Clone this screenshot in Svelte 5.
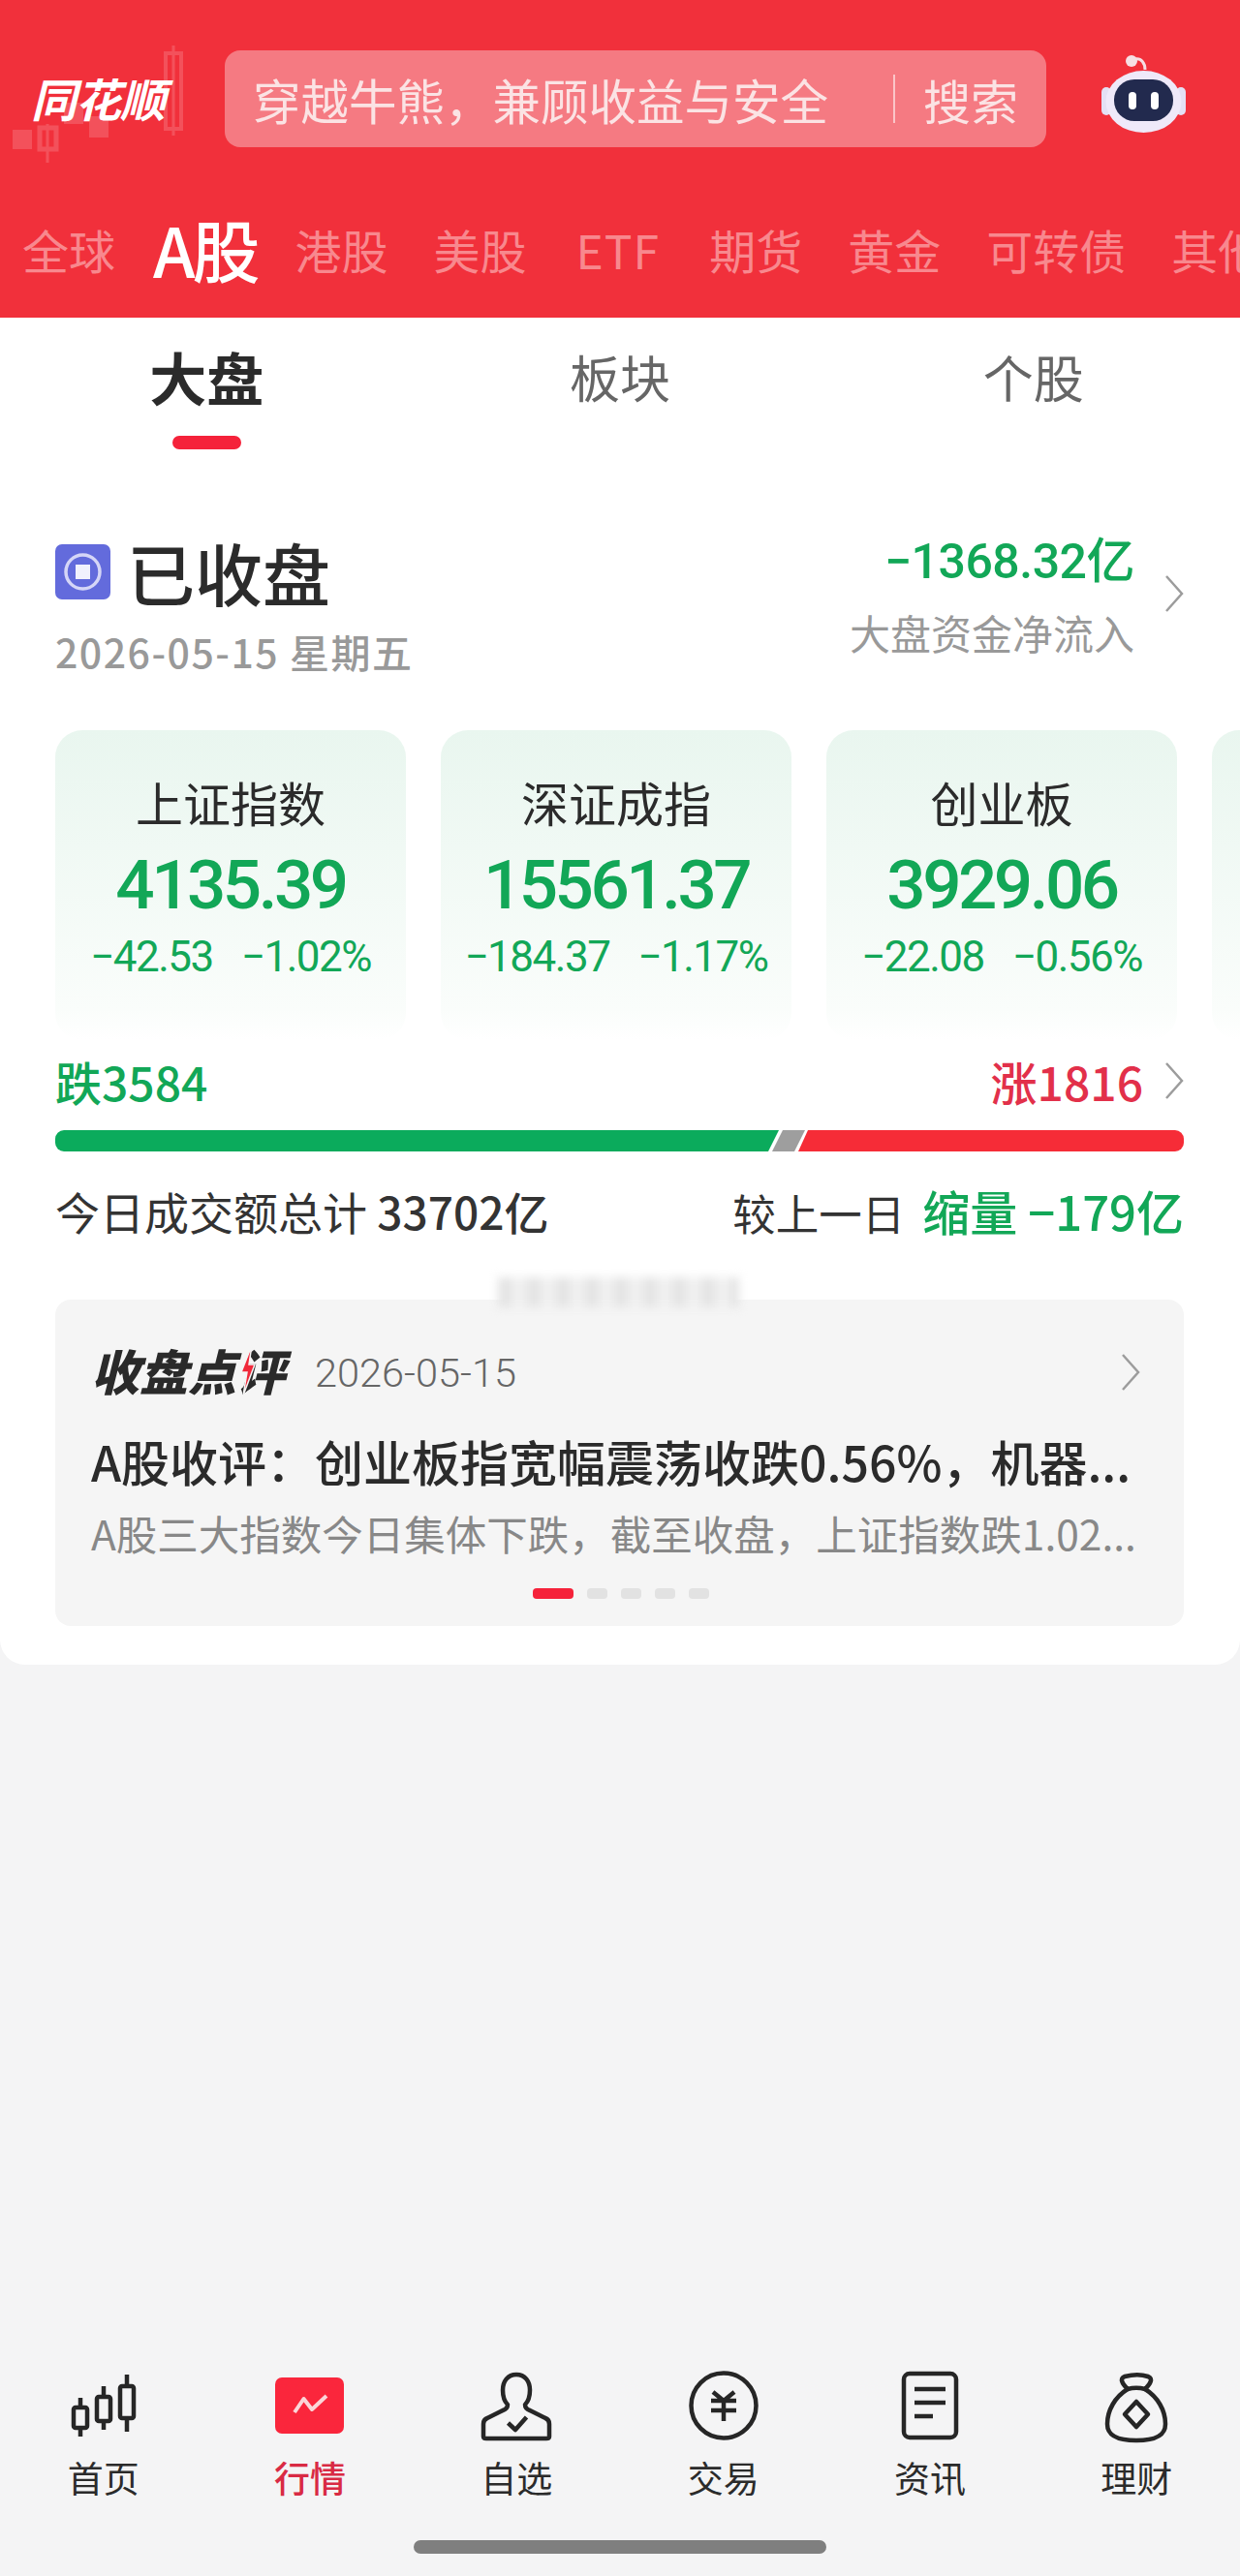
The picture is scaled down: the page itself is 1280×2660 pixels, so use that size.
<script>
	let markets = ["全球", "A股", "港股", "美股", "ETF", "期货", "黄金", "可转债", "其他"]
	let subTabs = ["大盘", "板块", "个股"]
	let indexes = [
		{ name: "上证指数", value: "4135.39", change: "−42.53", pct: "−1.02%" },
		{ name: "深证成指", value: "15561.37", change: "−184.37", pct: "−1.17%" },
		{ name: "创业板", value: "3929.06", change: "−22.08", pct: "−0.56%" }
	]
	let nav = ["首页", "行情", "自选", "交易", "资讯", "理财"]
</script>

<div class="page">
	<header class="top">
		<div class="top-row">
			<div class="logo">
				<svg class="logo-bg" width="200" height="130" viewBox="0 0 200 130" fill="#fff">
					<g opacity="0.16">
						<path d="M179 1v93" stroke="#fff" stroke-width="3" />
						<rect x="171" y="9" width="16" height="78" fill="none" stroke="#fff" stroke-width="4" />
						<rect x="13" y="88" width="20" height="20" />
						<rect x="41" y="86" width="17" height="22" fill="none" stroke="#fff" stroke-width="5" />
						<path d="M49 82v40" stroke="#fff" stroke-width="3" />
						<rect x="92" y="74" width="20" height="22" />
						<rect x="66" y="60" width="20" height="22" />
					</g>
				</svg>
				<span class="logo-text">同花顺</span>
			</div>
			<div class="search">
				<span class="hint">穿越牛熊，兼顾收益与安全</span>
				<span class="divider"></span>
				<span class="go">搜索</span>
			</div>
			<svg class="robot" width="88" height="84" viewBox="0 0 88 84">
				<path d="M35 4C41 3 45 8 45 15" fill="none" stroke="#f6dde3" stroke-width="3" />
				<circle cx="31" cy="6" r="6" fill="#f7dfe4" />
				<rect x="0" y="33" width="10" height="29" rx="5" fill="#e4e0f4" />
				<rect x="77" y="33" width="10" height="29" rx="5" fill="#e4e0f4" />
				<ellipse cx="43.500" cy="48" rx="39" ry="32" fill="#efe9f9" />
				<rect x="13" y="25" width="61" height="43" rx="21" fill="#222a4e" />
				<rect x="28" y="38" width="8" height="18" rx="4" fill="#fff" />
				<rect x="51" y="38" width="8" height="18" rx="4" fill="#fff" />
			</svg>
		</div>
		<nav class="markets">
			{#each markets as m, i}
				<span class:active={i == 1} class:etf={m == "ETF"}>{m}</span>
			{/each}
		</nav>
	</header>

	<main class="panel">
		<div class="subtabs">
			{#each subTabs as t, i}
				<div class="subtab" class:on={i == 0}>
					<span>{t}</span>
					{#if i == 0}<i></i>{/if}
				</div>
			{/each}
		</div>

		<section class="status">
			<div>
				<div class="state">
					<svg width="57" height="57" viewBox="0 0 57 57">
						<rect width="57" height="57" rx="7" fill="#636bdc" />
						<circle cx="28.500" cy="28.500" r="17.500" fill="none" stroke="#d5d6f7" stroke-width="3.500" />
						<rect x="21" y="21" width="15" height="15" fill="#f1f1fd" />
					</svg>
					<span>已收盘</span>
				</div>
				<div class="date">2026-05-15 星期五</div>
			</div>
			<div class="flow">
				<div>
					<div class="flow-num">−1368.32亿</div>
					<div class="flow-label">大盘资金净流入</div>
				</div>
				<svg class="chev" width="20" height="38" viewBox="0 0 20 38"><path d="M2 1l16 18L2 37" /></svg>
			</div>
		</section>

		<section class="cards">
			{#each indexes as c}
				<div class="card">
					<div class="name">{c.name}</div>
					<div class="value">{c.value}</div>
					<div class="change"><span>{c.change}</span><span>{c.pct}</span></div>
				</div>
			{/each}
			<div class="card"></div>
		</section>

		<section class="breadth">
			<span class="down">跌3584</span>
			<div class="up-wrap">
				<span class="up">涨1816</span>
				<svg class="chev" width="20" height="38" viewBox="0 0 20 38"><path d="M2 1l16 18L2 37" /></svg>
			</div>
		</section>
		<div class="bar">
			<div class="b-down"></div>
			<div class="b-flat"></div>
			<div class="b-up"></div>
		</div>

		<section class="totals">
			<div>今日成交额总计 <b>33702亿</b></div>
			<div class="compare">较上一日 <b class="green">缩量 −179亿</b></div>
		</section>

		<section class="review">
			<div class="smudge"></div>
			<div class="review-head">
				<span class="brand">收盘点评<svg class="bolt" width="18" height="52" viewBox="0 0 18 52"><path d="M13 0L2 28h6L4 52 16 20h-6z" /></svg></span>
				<span class="review-date">2026-05-15</span>
				<svg class="chev" width="20" height="40" viewBox="0 0 20 38"><path d="M2 1l16 18L2 37" /></svg>
			</div>
			<div class="review-title">A股收评：创业板指宽幅震荡收跌0.56%，机器...</div>
			<div class="review-sub">A股三大指数今日集体下跌，截至收盘，上证指数跌1.02...</div>
			<div class="dots">
				<i class="cur"></i><i></i><i></i><i></i><i></i>
			</div>
		</section>
	</main>

	<footer class="foot">
		<div class="tabs">
			{#each nav as n, i}
				<div class="tab" class:sel={i == 1}>
					<svg width="80" height="80" viewBox="0 0 80 80" fill="none" stroke="#262626" stroke-width="4.500" stroke-linejoin="round">
						{#if i == 0}
							<rect x="9" y="41" width="14" height="21" rx="2" />
							<path d="M16 31v10M16 62v9" />
							<rect x="33" y="30" width="14" height="25" rx="2" />
							<path d="M40 19v11M40 55v9" />
							<rect x="57" y="19" width="14" height="33" rx="2" />
							<path d="M64 7v12M64 52v14" />
						{:else if i == 1}
							<rect x="4" y="10" width="71" height="58" rx="7" fill="#fa263c" stroke="none" />
							<path d="M24 46l9.500-14 8.500 11 15-14" stroke="#fbd5d8" stroke-width="4" />
						{:else if i == 2}
							<path d="M40 7C31 7 26 14 26 23C26 30 28 35 31 38C31 41 29 43 26 44L10 52C7 53 6 55 6 58V71C6 73 7 73 9 73H71C73 73 74 73 74 71V58C74 55 73 53 70 52L54 44C51 43 49 41 49 38C52 35 54 30 54 23C54 14 49 7 40 7Z" />
							<path d="M31.500 57l7.500 7 11.500-13" />
						{:else if i == 3}
							<circle cx="40" cy="39" r="33.500" />
							<path d="M27 34h26M27 44h26M40 34v21M29 25l11 9 11-9" />
						{:else if i == 4}
							<rect x="13" y="6" width="54" height="66" rx="6" />
							<path d="M24 22h32M24 36h32M24 50h19" />
						{:else}
							<path d="M31 22C18 30 10 44 10 58C10 70 20 75 40 75C60 75 70 70 70 58C70 44 62 30 49 22" />
							<path d="M31 22C26 17 22 11 28 9C36 7 46 7 52 9C58 11 54 17 49 22C42 20 38 20 31 22Z" />
							<path d="M40 35l12 13-12 13-12-13z" />
						{/if}
					</svg>
					<span>{n}</span>
				</div>
			{/each}
		</div>
		<div class="home-bar"></div>
	</footer>
</div>

<style>
	:global(body) {
		margin: 0;
		background: #f4f4f5;
	}
	.page {
		min-height: 2660px;
		display: flex;
		flex-direction: column;
		font-family: "Noto Sans CJK SC", "Noto Sans", sans-serif;
		color: #2b2b2b;
	}

	.top {
		height: 328px;
		box-sizing: border-box;
		padding-top: 52px;
		background: #f1303b;
		overflow: hidden;
	}
	.top-row {
		display: flex;
		align-items: center;
		height: 100px;
	}
	.logo {
		position: relative;
		width: 232px;
		height: 100px;
		flex-shrink: 0;
	}
	.logo-bg {
		position: absolute;
		left: 0;
		top: -6px;
	}
	.logo-text {
		position: absolute;
		left: 32px;
		top: 21px;
		font-size: 47px;
		line-height: 56px;
		font-weight: 700;
		font-style: italic;
		color: #fff;
		letter-spacing: -1px;
	}
	.search {
		width: 848px;
		height: 100px;
		box-sizing: border-box;
		padding: 0 29px;
		display: flex;
		align-items: center;
		background: #f57a82;
		border-radius: 16px;
		font-size: 49.500px;
		color: #fbe3e4;
		flex-shrink: 0;
	}
	.hint {
		white-space: nowrap;
		width: 661px;
		flex-shrink: 0;
	}
	.divider {
		width: 2px;
		height: 50px;
		background: #fbc5c8;
	}
	.go {
		margin-left: 29px;
		font-size: 49px;
		white-space: nowrap;
	}
	.robot {
		margin-left: 57px;
		margin-top: -6px;
		flex-shrink: 0;
	}

	.markets {
		display: flex;
		align-items: center;
		height: 60px;
		margin-top: 75px;
		padding-left: 23px;
		gap: 47px;
		font-size: 48px;
		line-height: 60px;
		color: #f8888e;
		white-space: nowrap;
	}
	.markets .active {
		margin: 0 -8px;
		font-size: 70px;
		font-weight: 500;
		color: #fff;
		letter-spacing: -3px;
	}
	.markets .etf {
		margin: 0 4px;
		letter-spacing: 1px;
	}

	.panel {
		background: #fff;
		height: 1391px;
		box-sizing: border-box;
		border-radius: 0 0 26px 26px;
		overflow: hidden;
	}
	.subtabs {
		display: grid;
		grid-template-columns: repeat(3, 1fr);
		padding-top: 31px;
	}
	.subtab {
		display: flex;
		flex-direction: column;
		align-items: center;
		font-size: 52px;
		line-height: 60px;
		color: #666;
	}
	.subtab.on {
		font-size: 59px;
		font-weight: 700;
		color: #2b2b2b;
	}
	.subtab i {
		display: block;
		width: 71px;
		height: 14px;
		margin-top: 31px;
		border-radius: 7px;
		background: #f5223a;
	}

	.status {
		display: flex;
		justify-content: space-between;
		margin: 91px 58px 60px 57px;
		height: 139px;
	}
	.state {
		display: flex;
		align-items: center;
		height: 70px;
		font-size: 70px;
		font-weight: 500;
		gap: 17px;
	}
	.date {
		margin-top: 25px;
		font-size: 41px;
		line-height: 44px;
		color: #999;
		font-weight: 500;
		letter-spacing: 1.500px;
		white-space: nowrap;
	}
	.flow {
		display: flex;
		align-items: flex-start;
		gap: 31px;
		text-align: right;
	}
	.flow .chev {
		margin-top: 39px;
	}
	.flow-num {
		margin-top: 2px;
		font-size: 50px;
		line-height: 46px;
		font-weight: 500;
		color: #12a757;
		white-space: nowrap;
		font-family: "Roboto", "Noto Sans CJK SC", sans-serif;
		letter-spacing: -0.500px;
	}
	.flow-label {
		margin-top: 28px;
		font-size: 42px;
		line-height: 44px;
		color: #999;
		white-space: nowrap;
	}
	.chev {
		flex-shrink: 0;
		fill: none;
		stroke: #9c9c9c;
		stroke-width: 2.500;
	}

	.cards {
		display: flex;
		gap: 36px;
		margin-left: 57px;
		overflow: hidden;
	}
	.card {
		flex: 0 0 362px;
		height: 320px;
		box-sizing: border-box;
		padding-top: 47px;
		border-radius: 28px;
		text-align: center;
		background: linear-gradient(#e9f6ef, #fafdfb 90%, #fff);
	}
	.name {
		font-size: 49px;
		line-height: 54px;
	}
	.value {
		margin-top: 19px;
		font-family: "Roboto", sans-serif;
		font-size: 71px;
		line-height: 80px;
		font-weight: 500;
		color: #12a757;
		letter-spacing: -3.500px;
	}
	.change {
		display: flex;
		justify-content: center;
		gap: 29px;
		margin-top: 11px;
		font-family: "Roboto", sans-serif;
		font-size: 44px;
		line-height: 46px;
		color: #12a757;
		letter-spacing: -1.500px;
	}

	.breadth {
		display: flex;
		justify-content: space-between;
		margin: 17px 58px 0 57px;
		height: 50px;
		font-size: 48px;
		line-height: 50px;
		font-weight: 500;
	}
	.down {
		color: #12a757;
	}
	.up {
		color: #e2304a;
	}
	.up-wrap {
		display: flex;
		align-items: center;
		gap: 22px;
	}
	.bar {
		display: flex;
		height: 22px;
		margin: 26px 58px 0 57px;
		border-radius: 9px;
		overflow: hidden;
	}
	.b-down {
		flex: 0 0 747px;
		background: #0bab5c;
		clip-path: polygon(0 0, 100% 0, calc(100% - 11px) 100%, 0 100%);
	}
	.b-flat {
		flex: 0 0 34px;
		margin-left: -7px;
		background: #9e9e9e;
		clip-path: polygon(11px 0, 100% 0, calc(100% - 11px) 100%, 0 100%);
	}
	.b-up {
		flex: 1;
		margin-left: -7px;
		background: #f62c37;
		clip-path: polygon(10px 0, 100% 0, 100% 100%, 0 100%);
	}

	.totals {
		display: flex;
		justify-content: space-between;
		margin: 36px 58px 0 57px;
		font-size: 46px;
		line-height: 50px;
		color: #333;
		white-space: nowrap;
	}
	.totals b {
		font-weight: 500;
	}
	.compare {
		font-size: 44.500px;
	}
	.totals b.green {
		margin-left: 8px;
		font-size: 49px;
		color: #12a757;
	}

	.review {
		position: relative;
		height: 337px;
		box-sizing: border-box;
		margin: 65px 58px 0 57px;
		padding: 50px 37px 0;
		border-radius: 16px;
		background: #f5f5f5;
	}
	.smudge {
		position: absolute;
		left: 457px;
		top: -23px;
		width: 249px;
		height: 31px;
		filter: blur(5px);
		background: repeating-linear-gradient(90deg, #e4e4e4 0 14px, #f0f0f0 14px 30px);
	}
	.review-head {
		display: flex;
		align-items: center;
		height: 50px;
		white-space: nowrap;
	}
	.brand {
		position: relative;
		margin-top: -6px;
		font-size: 50px;
		line-height: 50px;
		font-weight: 900;
		font-style: italic;
		color: #2a2a2a;
	}
	.bolt {
		position: absolute;
		left: 153px;
		top: 0;
		fill: #f0283a;
		stroke: #f5f5f5;
		stroke-width: 1.500;
	}
	.review-date {
		margin-left: 31px;
		font-size: 41.500px;
		font-family: "Roboto", sans-serif;
		font-weight: 300;
		color: #666;
	}
	.review-head .chev {
		margin-left: auto;
		margin-right: 8px;
	}
	.review-title {
		margin-top: 39px;
		font-size: 50px;
		line-height: 54px;
		font-weight: 500;
		color: #2b2b2b;
		white-space: nowrap;
	}
	.review-sub {
		margin-top: 23px;
		font-size: 42.500px;
		line-height: 50px;
		color: #888;
		white-space: nowrap;
	}
	.dots {
		display: flex;
		justify-content: center;
		gap: 14px;
		margin: 32px 0 0 2px;
	}
	.dots i {
		display: block;
		width: 21px;
		height: 11px;
		border-radius: 4px;
		background: #e2e2e2;
	}
	.dots i.cur {
		width: 42px;
		background: #f5223a;
	}

	.foot {
		margin-top: auto;
	}
	.tabs {
		display: grid;
		grid-template-columns: repeat(6, 1fr);
	}
	.tab {
		display: flex;
		flex-direction: column;
		align-items: center;
		font-size: 37px;
		line-height: 44px;
		color: #2b2b2b;
	}
	.tab span {
		margin-top: 11px;
	}
	.tab svg {
		display: block;
	}
	.tab.sel {
		color: #d92a44;
		font-weight: 500;
	}
	.home-bar {
		width: 426px;
		height: 14px;
		margin: 43px auto 23px;
		border-radius: 7px;
		background: #7f7f7f;
	}
</style>
